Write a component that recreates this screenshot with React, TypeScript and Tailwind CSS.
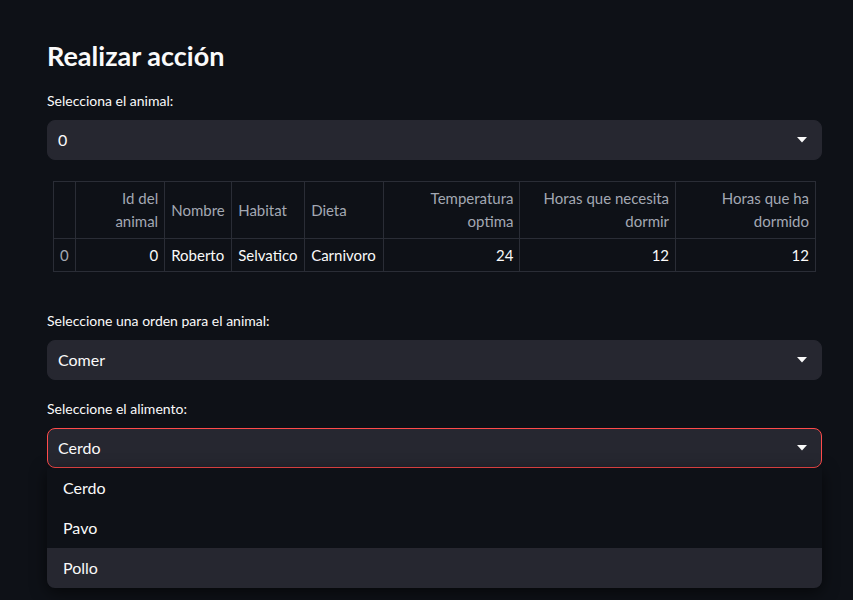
import { ReactNode } from "react";

const font = { fontFamily: "Lato, 'Noto Sans', sans-serif" };

const Chevron = () => (
  <svg width="10" height="6" viewBox="0 0 10 6" className="shrink-0">
    <path d="M0 0 L10 0 L5 5.5 Z" fill="#fafafa" />
  </svg>
);

const SelectBox = ({ value, active }: { value: string; active?: boolean }) => (
  <div
    className={
      active
        ? "flex h-10 items-center justify-between rounded-lg border border-[#ff4b4b] bg-[#262730] pl-[10px] pr-[14px] text-base text-[#fafafa]"
        : "flex h-10 items-center justify-between rounded-lg border border-[#262730] bg-[#262730] pl-[10px] pr-[14px] text-base text-[#fafafa]"
    }
  >
    <span>{value}</span>
    <Chevron />
  </div>
);

const Label = ({ children }: { children: ReactNode }) => (
  <div className="mb-[9px] text-sm text-[#fafafa]">{children}</div>
);

const columns = [
  { label: "", w: "w-[21px]", align: "text-left" },
  { label: "Id del animal", w: "w-[90px]", align: "text-right" },
  { label: "Nombre", w: "w-[67px]", align: "text-left" },
  { label: "Habitat", w: "w-[73px]", align: "text-left" },
  { label: "Dieta", w: "w-[79px]", align: "text-left" },
  { label: "Temperatura optima", w: "w-[137px]", align: "text-right" },
  { label: "Horas que necesita dormir", w: "w-[157px]", align: "text-right" },
  { label: "Horas que ha dormido", w: "w-[141px]", align: "text-right" },
];

const row = ["0", "0", "Roberto", "Selvatico", "Carnivoro", "24", "12", "12"];

const AnimalTable = () => (
  <div className="mx-[6px] mt-[21px]">
    <table className="table-fixed border-collapse text-[15px]">
      <thead>
        <tr>
          {columns.map((c, i) => (
            <th
              key={i}
              className={`${c.w} ${c.align} h-[57px] border border-[#2a2d36] px-[6px] align-middle font-normal leading-[23px] text-[#a3a8b3]`}
            >
              {c.label}
            </th>
          ))}
        </tr>
      </thead>
      <tbody>
        <tr>
          {row.map((v, i) => (
            <td
              key={i}
              className={`${columns[i].align} h-[33px] border border-[#2a2d36] px-[6px] ${
                i === 0 ? "text-[#a3a8b3]" : "text-[#fafafa]"
              }`}
            >
              {v}
            </td>
          ))}
        </tr>
      </tbody>
    </table>
  </div>
);

const options = ["Cerdo", "Pavo", "Pollo"];

export default function App() {
  return (
    <div className="min-h-[600px] bg-[#0e1117]" style={font}>
      <div className="ml-[47px] w-[775px] pt-[36px]">
        <h1 className="mb-[15px] text-[27px] font-bold leading-[40px] text-[#fafafa]">
          Realizar acción
        </h1>

        <Label>Selecciona el animal:</Label>
        <SelectBox value="0" />

        <AnimalTable />

        <div className="mt-[39px]">
          <Label>Seleccione una orden para el animal:</Label>
          <SelectBox value="Comer" />
        </div>

        <div className="mt-[19px]">
          <Label>Seleccione el alimento:</Label>
          <SelectBox value="Cerdo" active />
          <div className="overflow-hidden rounded-b-lg bg-[#0e1117] shadow-[0_4px_16px_rgba(0,0,0,0.6)]">
            {options.map((o) => (
              <div
                key={o}
                className={`flex h-10 items-center px-4 text-base text-[#fafafa] ${
                  o === "Pollo" ? "bg-[#262730]" : ""
                }`}
              >
                {o}
              </div>
            ))}
          </div>
        </div>
      </div>
    </div>
  );
}
